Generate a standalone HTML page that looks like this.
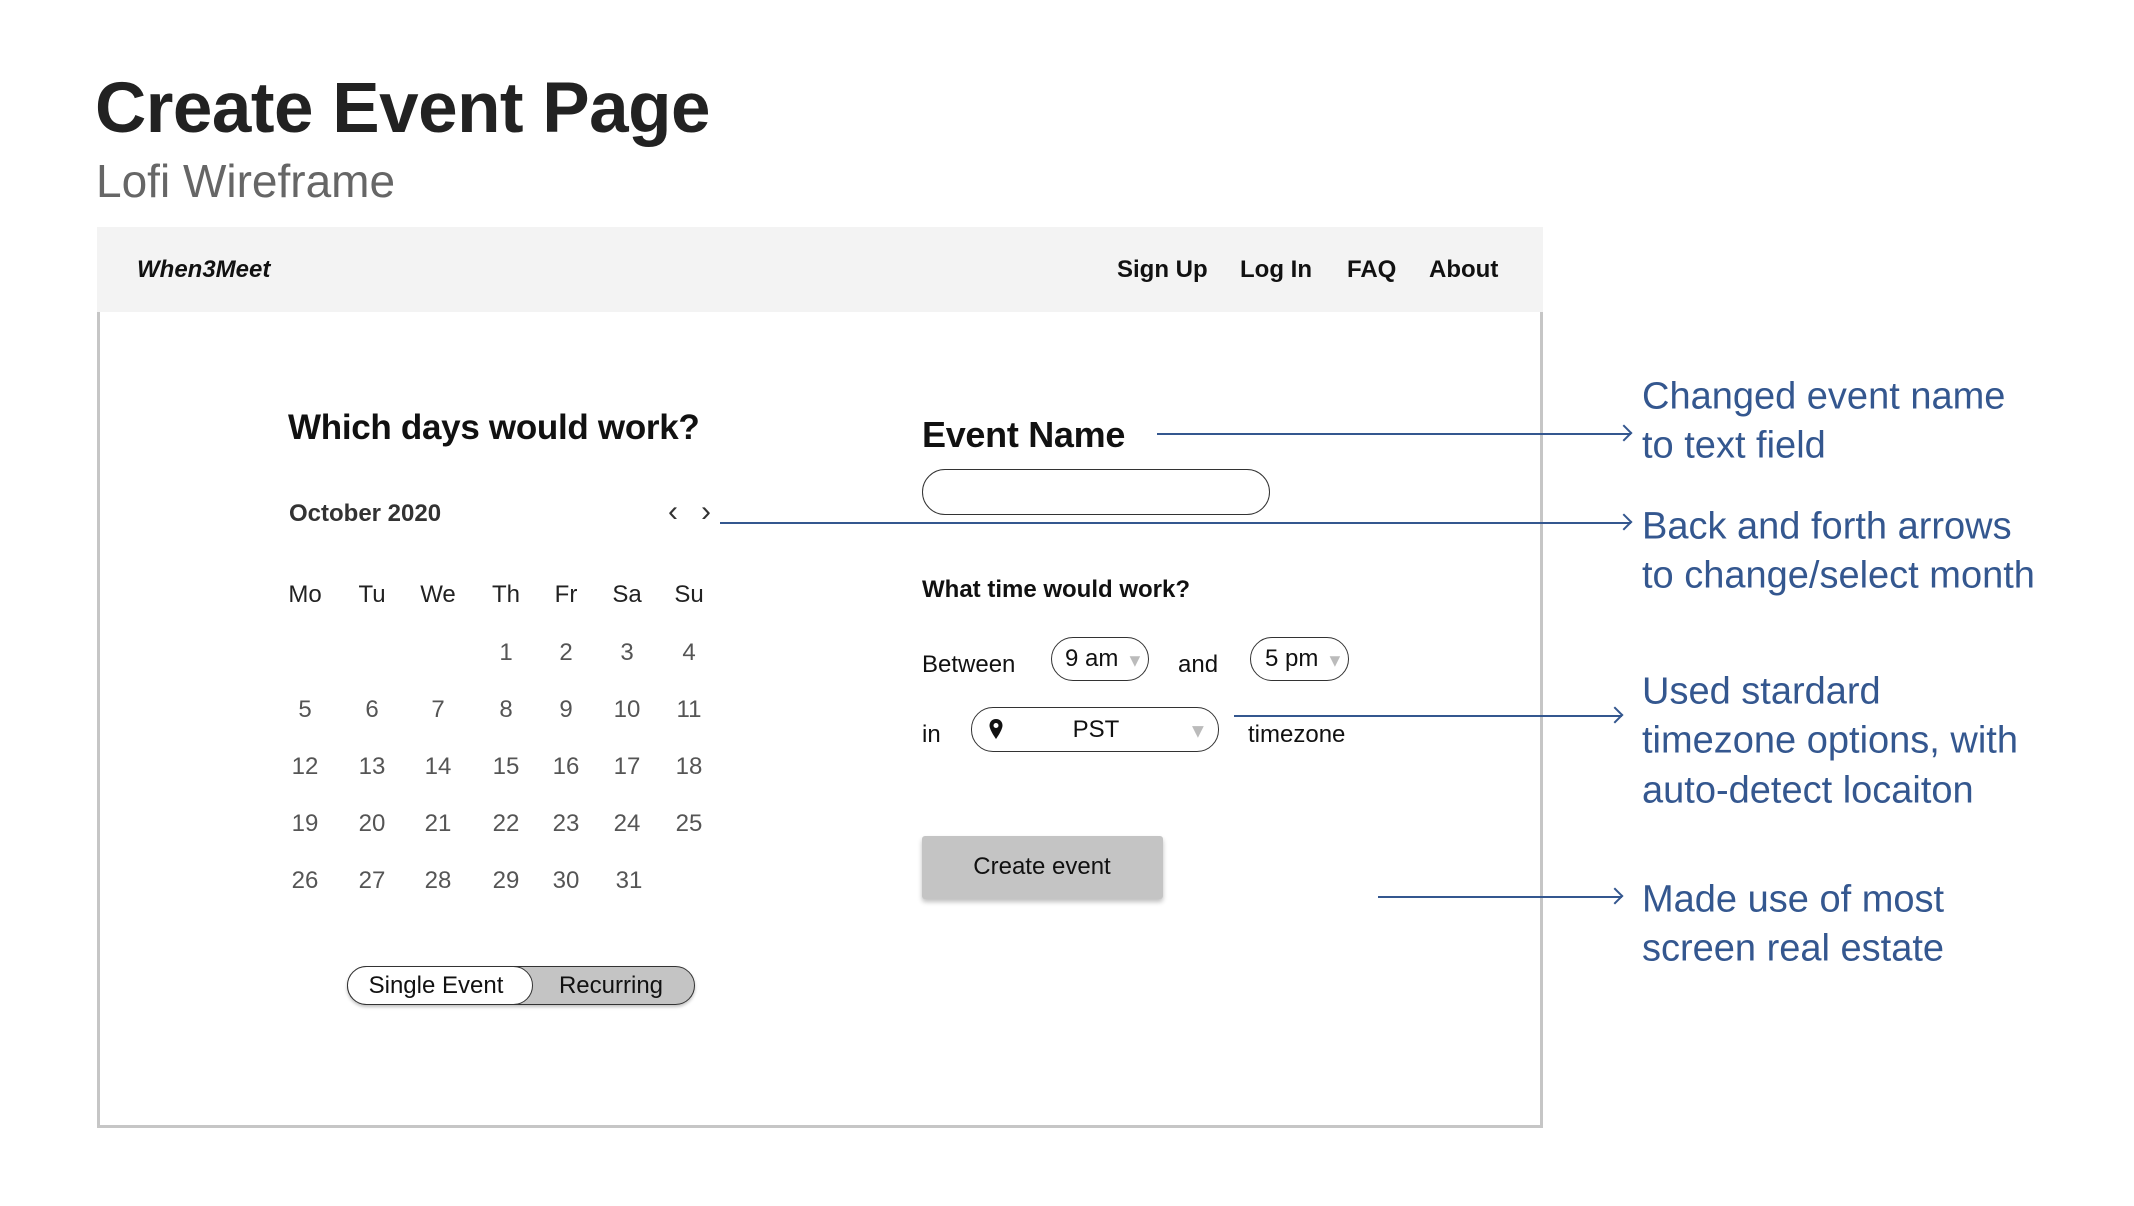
<!DOCTYPE html>
<html><head><meta charset="utf-8"><style>
*{margin:0;padding:0;box-sizing:border-box}
body{width:2134px;height:1206px;background:#fff;position:relative;overflow:hidden;font-family:"Liberation Sans",sans-serif;color:#111}
.a{position:absolute;white-space:nowrap}
.c{transform:translateY(-50%)}
.ctr{transform:translate(-50%,-50%)}
.num{font-size:24px;color:#555}
.hd{font-size:24px;color:#222}
.ann{color:#34578f;font-size:38px;left:1642px}
.ln{position:absolute;height:2px;background:#34578f}
.ln::after{content:"";position:absolute;right:0;top:-6px;width:10px;height:10px;border-top:2px solid #34578f;border-right:2px solid #34578f;transform:rotate(45deg);transform-origin:center;right:1px}
</style></head><body>
<div class="a" style="left:95px;top:68px;font-size:71px;font-weight:bold;color:#222;letter-spacing:-0.5px">Create Event Page</div>
<div class="a" style="left:96px;top:154px;font-size:46px;color:#666">Lofi Wireframe</div>

<div class="a" style="left:97px;top:227px;width:1446px;height:85px;background:#f3f3f3"></div>
<div class="a" style="left:97px;top:312px;width:1446px;height:816px;border:3px solid #c6c6c6;border-top:none"></div>
<div class="a c" style="left:137px;top:270px;font-size:24px;font-weight:bold;font-style:italic">When3Meet</div>
<div class="a c" style="left:1117px;top:270px;font-size:24px;font-weight:bold">Sign Up</div>
<div class="a c" style="left:1240px;top:270px;font-size:24px;font-weight:bold">Log In</div>
<div class="a c" style="left:1347px;top:270px;font-size:24px;font-weight:bold">FAQ</div>
<div class="a c" style="left:1429px;top:270px;font-size:24px;font-weight:bold">About</div>

<div class="a c" style="left:288px;top:428px;font-size:35px;font-weight:bold;letter-spacing:-0.3px">Which days would work?</div>
<div class="a c" style="left:289px;top:514px;font-size:24px;font-weight:bold;color:#333">October 2020</div>
<div class="a ctr" style="left:673px;top:512px;font-size:30px;color:#333">‹</div>
<div class="a ctr" style="left:706px;top:512px;font-size:30px;color:#333">›</div>

<div class="a ctr hd" style="left:305px;top:595px">Mo</div>
<div class="a ctr hd" style="left:372px;top:595px">Tu</div>
<div class="a ctr hd" style="left:438px;top:595px">We</div>
<div class="a ctr hd" style="left:506px;top:595px">Th</div>
<div class="a ctr hd" style="left:566px;top:595px">Fr</div>
<div class="a ctr hd" style="left:627px;top:595px">Sa</div>
<div class="a ctr hd" style="left:689px;top:595px">Su</div>

<div class="a ctr num" style="left:506px;top:653px">1</div>
<div class="a ctr num" style="left:566px;top:653px">2</div>
<div class="a ctr num" style="left:627px;top:653px">3</div>
<div class="a ctr num" style="left:689px;top:653px">4</div>

<div class="a ctr num" style="left:305px;top:710px">5</div>
<div class="a ctr num" style="left:372px;top:710px">6</div>
<div class="a ctr num" style="left:438px;top:710px">7</div>
<div class="a ctr num" style="left:506px;top:710px">8</div>
<div class="a ctr num" style="left:566px;top:710px">9</div>
<div class="a ctr num" style="left:627px;top:710px">10</div>
<div class="a ctr num" style="left:689px;top:710px">11</div>

<div class="a ctr num" style="left:305px;top:767px">12</div>
<div class="a ctr num" style="left:372px;top:767px">13</div>
<div class="a ctr num" style="left:438px;top:767px">14</div>
<div class="a ctr num" style="left:506px;top:767px">15</div>
<div class="a ctr num" style="left:566px;top:767px">16</div>
<div class="a ctr num" style="left:627px;top:767px">17</div>
<div class="a ctr num" style="left:689px;top:767px">18</div>

<div class="a ctr num" style="left:305px;top:824px">19</div>
<div class="a ctr num" style="left:372px;top:824px">20</div>
<div class="a ctr num" style="left:438px;top:824px">21</div>
<div class="a ctr num" style="left:506px;top:824px">22</div>
<div class="a ctr num" style="left:566px;top:824px">23</div>
<div class="a ctr num" style="left:627px;top:824px">24</div>
<div class="a ctr num" style="left:689px;top:824px">25</div>

<div class="a ctr num" style="left:305px;top:881px">26</div>
<div class="a ctr num" style="left:372px;top:881px">27</div>
<div class="a ctr num" style="left:438px;top:881px">28</div>
<div class="a ctr num" style="left:506px;top:881px">29</div>
<div class="a ctr num" style="left:566px;top:881px">30</div>
<div class="a ctr num" style="left:629px;top:881px">31</div>

<div class="a" style="left:347px;top:966px;width:348px;height:39px;border:1.5px solid #333;border-radius:20px;background:#c4c4c4;box-shadow:0 2px 3px rgba(0,0,0,.25)"></div>
<div class="a" style="left:347px;top:966px;width:186px;height:39px;border:1.5px solid #333;border-radius:20px;background:#fff"></div>
<div class="a ctr" style="left:436px;top:986px;font-size:24px">Single Event</div>
<div class="a ctr" style="left:611px;top:986px;font-size:24px">Recurring</div>

<div class="a c" style="left:922px;top:435px;font-size:36px;font-weight:bold;letter-spacing:-0.3px">Event Name</div>
<div class="a" style="left:922px;top:469px;width:348px;height:46px;border:1.5px solid #333;border-radius:23px"></div>
<div class="a c" style="left:922px;top:590px;font-size:24px;font-weight:bold">What time would work?</div>
<div class="a c" style="left:922px;top:665px;font-size:24px">Between</div>
<div class="a" style="left:1051px;top:637px;width:98px;height:44px;border:1.5px solid #333;border-radius:22px"></div>
<div class="a c" style="left:1065px;top:659px;font-size:24px">9 am</div>
<div class="a c" style="left:1126px;top:661px;font-size:18px;color:#bbb">▼</div>
<div class="a c" style="left:1178px;top:665px;font-size:24px">and</div>
<div class="a" style="left:1250px;top:637px;width:99px;height:44px;border:1.5px solid #333;border-radius:22px"></div>
<div class="a c" style="left:1265px;top:659px;font-size:24px">5 pm</div>
<div class="a c" style="left:1326px;top:661px;font-size:18px;color:#bbb">▼</div>
<div class="a c" style="left:922px;top:735px;font-size:24px">in</div>
<div class="a" style="left:971px;top:707px;width:248px;height:45px;border:1.5px solid #333;border-radius:22px"></div>
<svg class="a" style="left:988px;top:718px" width="16" height="22" viewBox="0 0 16 22"><path d="M8 1C4 1 1.5 4 1.5 7.5 1.5 12 8 21 8 21s6.5-9 6.5-13.5C14.5 4 12 1 8 1z" fill="#111"/><circle cx="8" cy="7.5" r="2.5" fill="#fff"/></svg>
<div class="a ctr" style="left:1096px;top:730px;font-size:24px">PST</div>
<div class="a c" style="left:1188px;top:732px;font-size:20px;color:#bbb">▼</div>
<div class="a c" style="left:1248px;top:735px;font-size:24px">timezone</div>

<div class="a" style="left:922px;top:836px;width:241px;height:63px;background:#c4c4c4;border-radius:3px;box-shadow:0 3px 5px rgba(0,0,0,.25)"></div>
<div class="a ctr" style="left:1042px;top:867px;font-size:24px">Create event</div>

<div class="ln" style="left:1157px;top:433px;width:474px"></div>
<div class="ln" style="left:720px;top:522px;width:911px"></div>
<div class="ln" style="left:1234px;top:715px;width:388px"></div>
<div class="ln" style="left:1378px;top:896px;width:244px"></div>

<div class="a c ann" style="top:397px">Changed event name</div>
<div class="a c ann" style="top:446px">to text field</div>
<div class="a c ann" style="top:527px">Back and forth arrows</div>
<div class="a c ann" style="top:576px">to change/select month</div>
<div class="a c ann" style="top:692px">Used stardard</div>
<div class="a c ann" style="top:741px">timezone options, with</div>
<div class="a c ann" style="top:791px">auto-detect locaiton</div>
<div class="a c ann" style="top:900px">Made use of most</div>
<div class="a c ann" style="top:949px">screen real estate</div>
</body></html>
